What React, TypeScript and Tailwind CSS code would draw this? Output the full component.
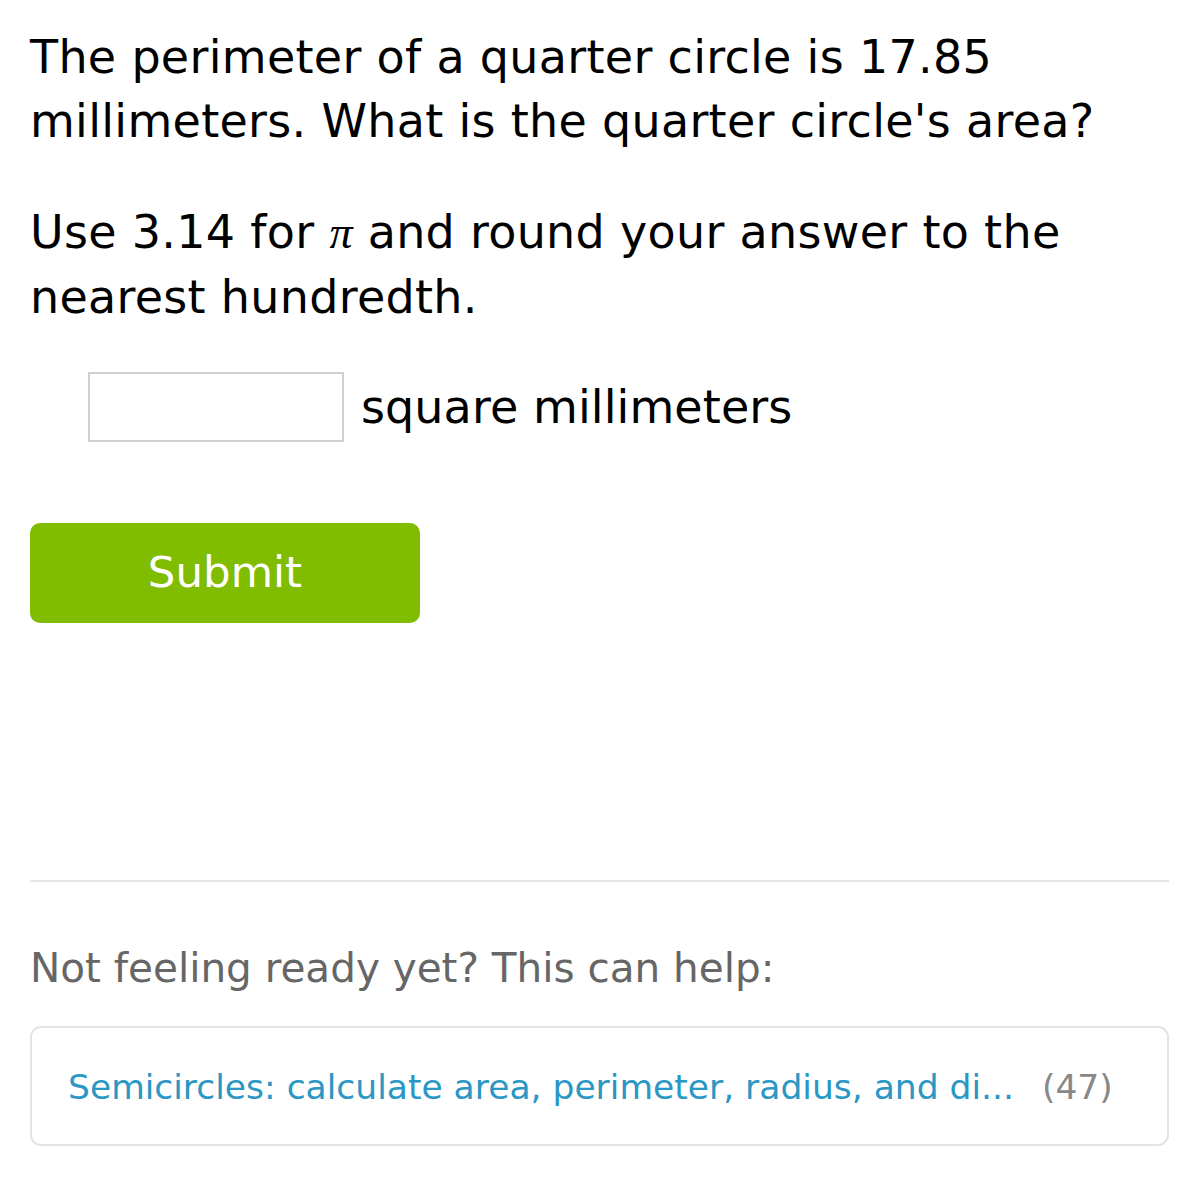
export default function App() {
  return (
    <div className="w-[1199px] min-h-[1200px] bg-white px-[30px] pt-[25px] text-black" style={{ fontFamily: '"DejaVu Sans", Verdana, sans-serif' }}>
      <p className="text-[46px] leading-[64px] tracking-[0.3px]">
        The perimeter of a quarter circle is 17.85 millimeters. What is the quarter circle's area?
      </p>
      <p className="mt-[47px] text-[46px] leading-[64px] tracking-[0.3px]">
        Use 3.14 for <span className="italic" style={{ fontFamily: '"Liberation Serif", serif' }}>π</span> and round your answer to the nearest hundredth.
      </p>
      <div className="mt-[43px] flex items-center pl-[58px]">
        <input className="h-[70px] w-[256px] border-2 border-[#d0d0d0] bg-white outline-none" />
        <span className="ml-[17px] text-[46px] leading-[64px] tracking-[0.1px]">square millimeters</span>
      </div>
      <button className="mt-[81px] h-[100px] w-[390px] rounded-[10px] bg-[#80bc00] text-[43.5px] text-white">Submit</button>
      <div className="mt-[257px] h-[2px] w-full bg-[#e6e6e6]" />
      <p className="mt-[54px] text-[40.5px] leading-[64px] text-[#666]">Not feeling ready yet? This can help:</p>
      <div className="mt-[26px] flex h-[120px] items-center rounded-[11px] border-2 border-[#e3e3e3] px-[36px] pt-[4px] text-[34.5px] whitespace-nowrap">
        <span className="text-[#2a97c4]">Semicircles: calculate area, perimeter, radius, and di...</span>
        <span className="ml-[28px] text-[#888]">(47)</span>
      </div>
    </div>
  )
}
